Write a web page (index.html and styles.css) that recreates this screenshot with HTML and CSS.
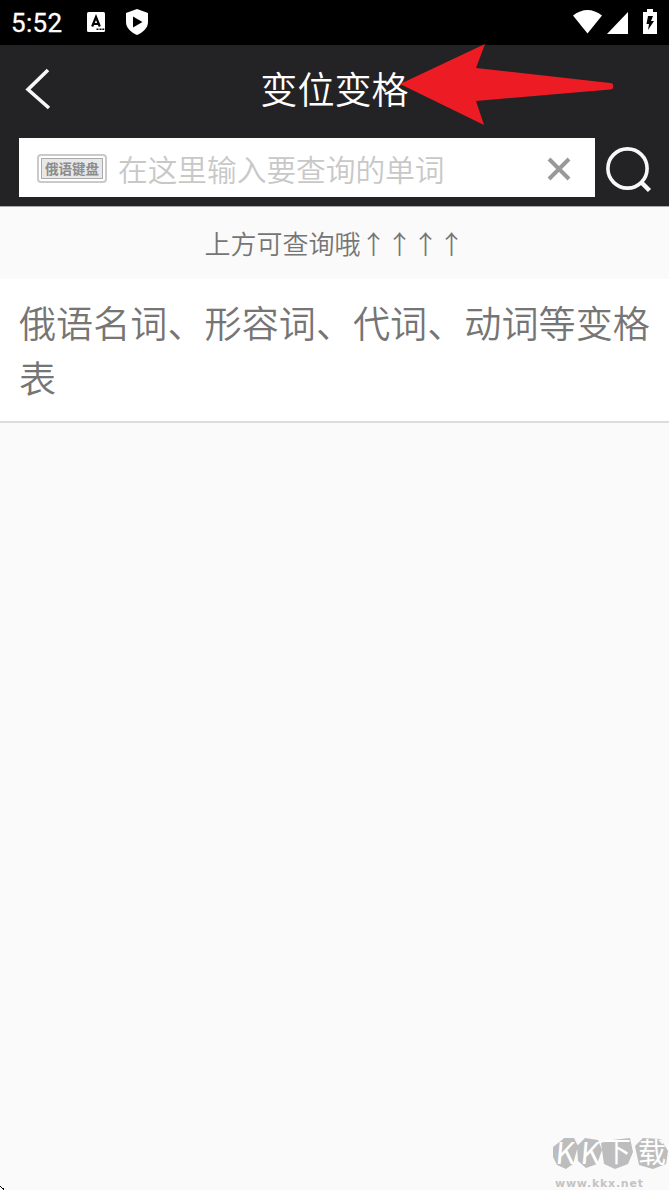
FILE: index.html
```html
<!DOCTYPE html>
<html lang="zh-CN">
<head>
<meta charset="utf-8">
<title>变位变格</title>
<link rel="stylesheet" href="styles.css">
</head>
<body>
<div class="screen">
  <div class="status">
    <span class="clock">5:52</span>
    <svg class="app-icon" width="18" height="20" viewBox="0 0 18 20"><rect width="18" height="20" rx="1.5" fill="#fff"/><path d="M5.200 14.500 9 5l3.800 9.500M6.300 12h5.400" fill="none" stroke="#000" stroke-width="2.200"/><path d="M9.500 16.500h2v1.500h-2zM12.500 16.500h2v1.500h-2zM15.300 16.500h2v1.500h-2z"/></svg>
    <svg class="shield" width="22" height="26" viewBox="0 0 22 26"><path d="M11 0 22 4v9c0 6-5 10.500-11 13C5 23.500 0 19 0 13V4z" fill="#fff"/><path d="M7 7.500v11l9.500-5.500z"/></svg>
    <span class="spacer"></span>
    <svg class="wifi" width="30" height="24" viewBox="0 0 30 24"><path d="M0 5.500Q14.500-5.500 29 5.500L14.500 23.500z" fill="#fff"/></svg>
    <svg class="signal" width="21" height="22" viewBox="0 0 21 22"><path d="M21 0v22H0z" fill="#fff"/></svg>
    <svg class="battery" width="14" height="25" viewBox="0 0 14 25"><path d="M4 0h6v3h4v22H0V3h4z" fill="#fff"/><path d="M5 7h5l-2 5h3L5 21l1-6H3.500z"/></svg>
  </div>
  <header class="bar">
    <svg class="back" width="26" height="42" viewBox="0 0 26 42"><path d="M23 2 3 21.500 24 40" fill="none" stroke="#f7f7f7" stroke-width="3.600"/></svg>
    <h1 class="title">变位变格</h1>
    <svg class="pointer" width="214" height="82" viewBox="0 0 214 82"><path d="M0 40 85 0 76 24 210 39a3 3 0 0 1 0 6.500L76 57 84 81z" fill="#ed1c24"/></svg>
  </header>
  <div class="search">
    <div class="field">
      <span class="keyboard"><span class="keyboard-label">俄语键盘</span></span>
      <span class="placeholder">在这里输入要查询的单词</span>
      <svg class="clear" width="24" height="24" viewBox="0 0 24 24"><path d="M2 2 22 22M22 2 2 22" stroke="#999" stroke-width="4"/></svg>
    </div>
    <svg class="find" width="46" height="46" viewBox="0 0 46 46" fill="none" stroke="#f8f8f8"><circle cx="21.500" cy="21.500" r="19.600" stroke-width="3.600"/><path d="M35 35 43.500 43.500" stroke-width="4.500"/></svg>
  </div>
  <div class="hint">上方可查询哦↑↑↑↑</div>
  <div class="item">俄语名词、形容词、代词、动词等变格表</div>
  <div class="watermark">
    <svg class="mark" width="116" height="46" viewBox="0 -6 116 46">
      <path d="M0 10 9 3 11 1 21 1 25 9 20 27 13 32 4 28 0 20zM24 9 32 1 45 3 49 13 44 27 33 31 25 24zM48 6 59 3 77 1 80 15 75 27 62 32 51 27zM82 9 90 1 108 2 115 14 113 27 100 32 86 28z" fill="#bdbdbd"/>
      <g fill="#fff" class="mark-text"><text x="4" y="27" transform="skewX(-5)">K</text><text x="29" y="27" transform="skewX(-5)">K</text><text x="50" y="25">下</text><text x="85" y="26">载</text></g>
    </svg>
    <span class="site">www.kkx.net</span>
  </div>
  <svg class="corner" width="5" height="5" viewBox="0 0 5 5"><path d="M0 1h1v1H0zM1 2h1v1H1zM2 3h2v1H2zM3 4h1v1H3z"/></svg>
</div>
</body>
</html>
```
FILE: styles.css
```css
* { box-sizing: border-box; }
body { margin: 0; font-family: "Noto Sans CJK SC", sans-serif; }
svg { display: block; flex: none; }
.screen {
  position: relative;
  width: 669px;
  height: 1190px;
  overflow: hidden;
  background: #fafafa;
}
.status {
  display: flex;
  align-items: flex-start;
  height: 45px;
  padding: 0 12px 0 11px;
  background: #000;
}
.clock {
  width: 76px;
  padding-top: 8px;
  color: #fff;
  font: 400 26px/30px Roboto, sans-serif;
  letter-spacing: 0.3px;
  -webkit-text-stroke: 0.3px #fff;
}
.app-icon { margin-top: 12px; }
.shield { margin: 9px 0 0 21px; }
.spacer { flex: 1; }
.wifi { margin: 10px 4px 0 0; }
.signal { margin: 12px 15px 0 0; }
.battery { margin-top: 9px; }
.bar {
  position: relative;
  display: flex;
  align-items: flex-start;
  justify-content: center;
  height: 93px;
  padding-top: 16px;
  background: #232325;
}
.back { position: absolute; left: 25px; top: 23px; }
.title {
  margin: 0;
  color: #fff;
  font-size: 37.1px;
  font-weight: 350;
  line-height: 54px;
}
.pointer { position: absolute; left: 400px; top: -1px; }
.search {
  display: flex;
  height: 69px;
  padding-left: 19px;
  background: #232325;
  border-bottom: 1px solid #aaa;
}
.field {
  display: flex;
  align-items: center;
  width: 576px;
  height: 59px;
  padding: 0 24px 0 18px;
  background: #fff;
}
.keyboard {
  display: flex;
  width: 70px;
  height: 29px;
  padding: 2px;
  border: 2px solid #cacaca;
  border-radius: 4px;
  margin: 2px 11px 0 0;
}
.keyboard-label {
  flex: 1;
  border: 1px solid #aaa;
  background: #e8e8e8;
  color: #8c8c8c;
  font-size: 13.5px;
  font-weight: 700;
  line-height: 18px;
  text-align: center;
  white-space: nowrap;
}
.placeholder {
  flex: 1;
  color: #c8c8c8;
  font-size: 29.7px;
  font-weight: 350;
  line-height: 44px;
  padding-top: 2px;
  white-space: nowrap;
}
.clear { margin-top: 3px; }
.find { margin: 9px 0 0 11px; }
.hint {
  height: 72px;
  padding-top: 17px;
  color: #757575;
  font-size: 26px;
  font-weight: 350;
  line-height: 38px;
  text-align: center;
}
.item {
  height: 144px;
  padding: 16px 0 0 19px;
  background: #fff;
  border-bottom: 2px solid #dcdcdc;
  color: #757575;
  font-size: 37.12px;
  font-weight: 350;
  line-height: 55px;
}
.watermark { position: absolute; left: 553px; top: 1131px; }
.mark-text { font-size: 30px; font-weight: 400; }
.mark-text text:nth-child(n+3) { font-size: 28px; }
.site {
  display: block;
  color: #c4c4c4;
  font: 700 11px/14px "DejaVu Sans", sans-serif;
  letter-spacing: 0.75px;
  margin: 0 0 0 2px;
}
.corner { position: absolute; left: 0; bottom: 0; }
```
